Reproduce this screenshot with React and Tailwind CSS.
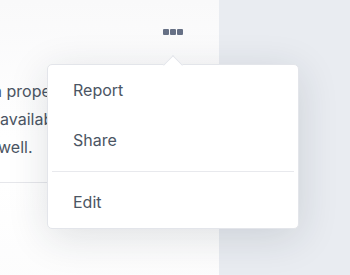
import React from 'react';

// Menú contextual abierto sobre una tarjeta
const items = ['Report', 'Share'];

const Dots = () => (
  <div className="absolute left-[163px] top-[29px] flex gap-[1px]">
    <span className="w-[6px] h-[6px] rounded-[1px] bg-[#667085]"></span>
    <span className="w-[6px] h-[6px] rounded-[1px] bg-[#667085]"></span>
    <span className="w-[6px] h-[6px] rounded-[1px] bg-[#667085]"></span>
  </div>
);

const Menu = () => (
  <div className="absolute left-[47px] top-[64px] w-[252px]">
    {/* flechita */}
    <div className="absolute left-[119px] top-[-6px] w-[14px] h-[14px] rotate-45 bg-white border-l border-t border-[#e3e5ea] z-10"></div>
    <div className="relative bg-white border border-[#e3e5ea] rounded-[5px] shadow-[0_8px_40px_rgba(30,40,60,0.14)]">
      {items.map((label) => (
        <div key={label} className="h-[50px] flex items-center pl-[25px] text-[16px] text-[#4b5563]">
          {label}
        </div>
      ))}
      <div className="mx-[4px] mt-[6px] mb-[5px] border-t border-[#e8e9ed]"></div>
      <div className="h-[50px] flex items-center pl-[25px] text-[16px] text-[#4b5563]">Edit</div>
      <div className="h-[1px]"></div>
    </div>
  </div>
);

export default function App() {
  return (
    <div className="relative w-[350px] h-[275px] flex overflow-hidden" style={{ fontFamily: 'Inter, "Noto Sans", sans-serif' }}>
      <div className="w-[219px] h-full bg-gradient-to-b from-[#f9f9fa] via-white to-white overflow-hidden">
        <div className="h-[183px] border-b border-[#e6e7eb] pt-[77px] text-[16px] leading-[28px] text-[#4b5563] whitespace-nowrap">
          <div className="ml-[-7px]">a proper method</div>
          <div className="ml-[0px]">available here</div>
          <div className="ml-[-2px]">well.</div>
        </div>
        <div className="h-full bg-gradient-to-b from-white to-[#f7f7f8]"></div>
      </div>
      <div className="flex-1 h-full bg-[#e9ecf1]"></div>
      <Dots />
      <Menu />
    </div>
  );
}
